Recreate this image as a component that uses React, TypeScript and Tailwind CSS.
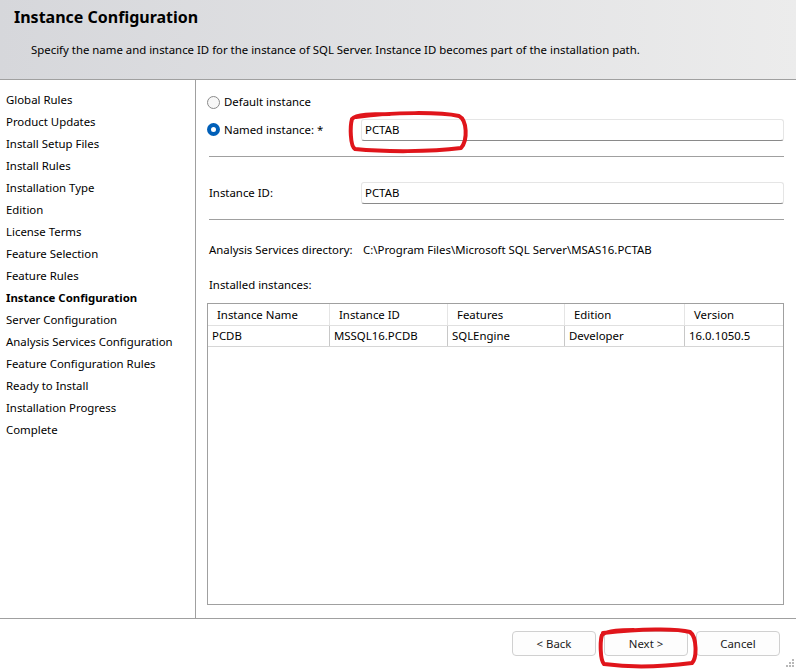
const steps = [
  "Global Rules",
  "Product Updates",
  "Install Setup Files",
  "Install Rules",
  "Installation Type",
  "Edition",
  "License Terms",
  "Feature Selection",
  "Feature Rules",
  "Instance Configuration",
  "Server Configuration",
  "Analysis Services Configuration",
  "Feature Configuration Rules",
  "Ready to Install",
  "Installation Progress",
  "Complete",
];

const columns = [
  { label: "Instance Name", w: "w-[122px]" },
  { label: "Instance ID", w: "w-[118px]" },
  { label: "Features", w: "w-[117px]" },
  { label: "Edition", w: "w-[120px]" },
  { label: "Version", w: "flex-1" },
];

const row = ["PCDB", "MSSQL16.PCDB", "SQLEngine", "Developer", "16.0.1050.5"];

function Radio({ checked }: { checked?: boolean }) {
  return checked ? (
    <span className="flex h-[13px] w-[13px] items-center justify-center rounded-full bg-[#005fb8]">
      <span className="h-[5px] w-[5px] rounded-full bg-white" />
    </span>
  ) : (
    <span className="h-[13px] w-[13px] rounded-full border border-[#8a8a8a] bg-[#f7f7f7]" />
  );
}

function TextBox({ value }: { value: string }) {
  return (
    <div className="flex h-[22px] flex-1 items-center rounded-[3px] border border-[#e5e5e5] border-b-[#8a8a8a] bg-white pl-[3px]">
      {value}
    </div>
  );
}

function Button({ children }: { children: string }) {
  return (
    <button className="flex h-[25px] w-[84px] items-center justify-center rounded-[4px] border border-[#d0d0d0] bg-[#fdfdfd] text-[#1b1b1b]">
      {children}
    </button>
  );
}

export default function App() {
  return (
    <div
      className="relative flex h-[669px] w-[796px] flex-col overflow-hidden bg-white text-[11.4px] text-black"
      style={{ fontFamily: '"Noto Sans", "Liberation Sans", sans-serif' }}
    >
      {/* header */}
      <div className="h-[80px] shrink-0 border-b border-[#a0a0a0] bg-gradient-to-r from-[#d6d7db] to-[#ececec]">
        <div className="pl-[14px] pt-[6px] text-[16px] font-bold leading-[22px]">Instance Configuration</div>
        <div className="pl-[31px] pt-[14px] leading-[16px]">
          Specify the name and instance ID for the instance of SQL Server. Instance ID becomes part of the installation path.
        </div>
      </div>

      {/* body */}
      <div className="flex min-h-0 flex-1">
        <div className="w-[196px] shrink-0 border-r border-[#a0a0a0] pl-[6px] pt-[9px]">
          {steps.map((s) => (
            <div key={s} className={`leading-[22px] ${s === "Instance Configuration" ? "font-bold" : ""}`}>
              {s}
            </div>
          ))}
        </div>

        <div className="flex min-w-0 flex-1 flex-col pl-[11px] pr-[12px] pt-[11px]">
          <div className="flex h-[22px] items-center gap-[4px]">
            <Radio />
            <span>Default instance</span>
          </div>
          <div className="mt-[6px] flex h-[22px] items-center">
            <div className="flex w-[154px] items-center gap-[4px]">
              <Radio checked />
              <span>Named instance: *</span>
            </div>
            <TextBox value="PCTAB" />
          </div>
          <div className="ml-[2px] mt-[15px] h-px bg-[#a0a0a0]" />

          <div className="mt-[25px] flex h-[22px] items-center">
            <div className="w-[154px] pl-[2px]">Instance ID:</div>
            <TextBox value="PCTAB" />
          </div>
          <div className="ml-[2px] mt-[15px] h-px bg-[#a0a0a0]" />

          <div className="mt-[19px] flex h-[22px] items-center">
            <div className="w-[156px] shrink-0 pl-[2px]">Analysis Services directory:</div>
            <div>C:\Program Files\Microsoft SQL Server\MSAS16.PCTAB</div>
          </div>

          <div className="mt-[13px] flex h-[22px] items-center pl-[2px]">Installed instances:</div>

          <div className="mb-[13px] mt-[7px] flex-1 border border-[#a0a0a0] bg-white">
            <div className="flex h-[22px] border-b border-[#e0e0e0]">
              {columns.map((c, i) => (
                <div
                  key={c.label}
                  className={`flex items-center pl-[9px] ${c.w} ${i < columns.length - 1 ? "border-r border-[#e5e5e5]" : ""}`}
                >
                  {c.label}
                </div>
              ))}
            </div>
            <div className="flex h-[21px] border-b border-[#d6d6d6]">
              {row.map((v, i) => (
                <div
                  key={v}
                  className={`flex items-center pl-[4px] ${columns[i].w} ${i < row.length - 1 ? "border-r border-[#c8c8c8]" : ""}`}
                >
                  {v}
                </div>
              ))}
            </div>
          </div>
        </div>
      </div>

      {/* footer */}
      <div className="flex h-[51px] shrink-0 items-start justify-end gap-[8px] border-t border-[#a0a0a0] pr-[16px] pt-[12px]">
        <Button>&lt; Back</Button>
        <Button>Next &gt;</Button>
        <Button>Cancel</Button>
      </div>

      {/* size grip */}
      <svg className="absolute bottom-[2px] right-[2px]" width="10" height="10" viewBox="0 0 10 10">
        <g fill="#b8b8b8">
          <rect x="8" y="2" width="2" height="2" />
          <rect x="5" y="5" width="2" height="2" />
          <rect x="8" y="5" width="2" height="2" />
          <rect x="2" y="8" width="2" height="2" />
          <rect x="5" y="8" width="2" height="2" />
          <rect x="8" y="8" width="2" height="2" />
        </g>
      </svg>

      {/* red hand-drawn annotations */}
      <svg className="pointer-events-none absolute left-0 top-0" width="796" height="669" viewBox="0 0 796 669">
        <g fill="none" stroke="#e0151b" strokeWidth="4" strokeLinecap="round" strokeLinejoin="round">
          <path d="M356 117 C395 112 440 112 459 116 C467 120 468 140 461 148 C430 152 385 152 355 149 C350 146 350 126 352 119 C356 114 372 114 390 114" />
          <path d="M603 633 C640 629 676 628 690 632 C697 637 697 658 692 663 C660 667 626 667 604 664 C600 660 600 641 602 635 C608 630 622 630 634 630" />
        </g>
      </svg>
    </div>
  );
}
